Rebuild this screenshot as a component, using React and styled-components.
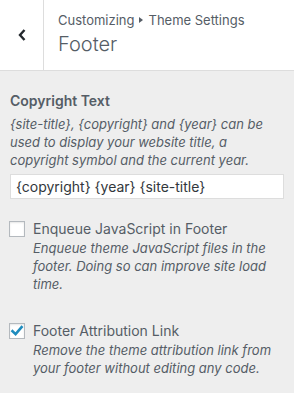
import React from "react";
import styled, { createGlobalStyle } from "styled-components";

const Global = createGlobalStyle`
  html, body { margin: 0; padding: 0; }
  body {
    background: #eeeeee;
    font-family: Inter, Roboto, "Noto Sans", sans-serif;
    color: #444;
  }
`;

const Panel = styled.div`
  width: 294px;
  min-height: 393px;
  background: #eeeeee;
`;

const Header = styled.div`
  display: flex;
  height: 70px;
  background: #fff;
  border-bottom: 1px solid #dddddd;
`;

const BackButton = styled.button`
  width: 44px;
  flex: none;
  border: 0;
  border-right: 1px solid #dddddd;
  background: #fff;
  display: flex;
  align-items: center;
  justify-content: center;
  padding: 0;
  color: #23282d;
`;

const Titles = styled.div`
  display: flex;
  flex-direction: column;
  padding: 11px 0 0 14px;
`;

const Crumb = styled.span`
  font-size: 13px;
  line-height: 18px;
  color: #555d66;
  display: flex;
  align-items: center;
  gap: 4px;
`;

const Arrow = styled.span`
  display: inline-block;
  width: 0;
  height: 0;
  border-top: 3.5px solid transparent;
  border-bottom: 3.5px solid transparent;
  border-left: 4px solid #555d66;
  margin: 0 1px;
`;

const PanelTitle = styled.h2`
  margin: 2px 0 0;
  font-size: 20px;
  line-height: 26px;
  font-weight: 300;
  color: #555d66;
`;

const Body = styled.div`
  padding: 20px 10px 0 10px;
  display: flex;
  flex-direction: column;
`;

const Control = styled.div`
  margin-bottom: ${(p) => p.$gap || 0}px;
`;

const ControlTitle = styled.div`
  font-size: 14px;
  font-weight: 600;
  line-height: 20px;
  color: #555d66;
  margin-bottom: 4px;
`;

const Description = styled.div`
  font-size: 13px;
  font-style: italic;
  line-height: 18px;
  color: #555d66;
`;

const TextInput = styled.input`
  box-sizing: border-box;
  display: block;
  width: 274px;
  height: 25px;
  margin-top: 5px;
  border: 1px solid #dddddd;
  background: #fff;
  padding: 0 5px;
  font-family: inherit;
  font-size: 14px;
  color: #32373c;
  outline: none;
`;

const CheckRow = styled.label`
  display: flex;
  align-items: center;
  gap: 8px;
  font-size: 14px;
  line-height: 20px;
  color: #555d66;
`;

const Box = styled.span`
  box-sizing: border-box;
  width: 16px;
  height: 16px;
  margin-left: -1px;
  border: 1px solid #b4b9be;
  background: #fff;
  box-shadow: inset 0 1px 2px rgba(0, 0, 0, 0.1);
  display: flex;
  align-items: center;
  justify-content: center;
  flex: none;
`;

const CheckDesc = styled(Description)`
  padding-left: 23px;
`;

function Checkbox({ checked }) {
  return (
    <Box>
      {checked && (
        <svg width="14" height="14" viewBox="0 0 14 14">
          <path d="M2.5 7.2 L5.6 10.2 L11.6 3.2" fill="none" stroke="#1e8cbe" strokeWidth="2.6" strokeLinecap="square" />
        </svg>
      )}
    </Box>
  );
}

export default function App() {
  return (
    <>
      <Global />
      <Panel>
        <Header>
          <BackButton aria-label="Back">
            <svg width="10" height="14" viewBox="0 0 10 14">
              <path d="M7.5 2 L3 7 L7.5 12" fill="none" stroke="#23282d" strokeWidth="2.4" />
            </svg>
          </BackButton>
          <Titles>
            <Crumb>
              Customizing <Arrow /> Theme Settings
            </Crumb>
            <PanelTitle>Footer</PanelTitle>
          </Titles>
        </Header>
        <Body>
          <Control $gap={20}>
            <ControlTitle>Copyright Text</ControlTitle>
            <Description>
              {"{site-title}, {copyright} and {year} can be used to display your website title, a copyright symbol and the current year."}
            </Description>
            <TextInput defaultValue="{copyright} {year} {site-title}" />
          </Control>
          <Control $gap={28}>
            <CheckRow>
              <Checkbox />
              Enqueue JavaScript in Footer
            </CheckRow>
            <CheckDesc>
              Enqueue theme JavaScript files in the footer. Doing so can improve site load time.
            </CheckDesc>
          </Control>
          <Control>
            <CheckRow>
              <Checkbox checked />
              Footer Attribution Link
            </CheckRow>
            <CheckDesc>
              Remove the theme attribution link from your footer without editing any code.
            </CheckDesc>
          </Control>
        </Body>
      </Panel>
    </>
  );
}
